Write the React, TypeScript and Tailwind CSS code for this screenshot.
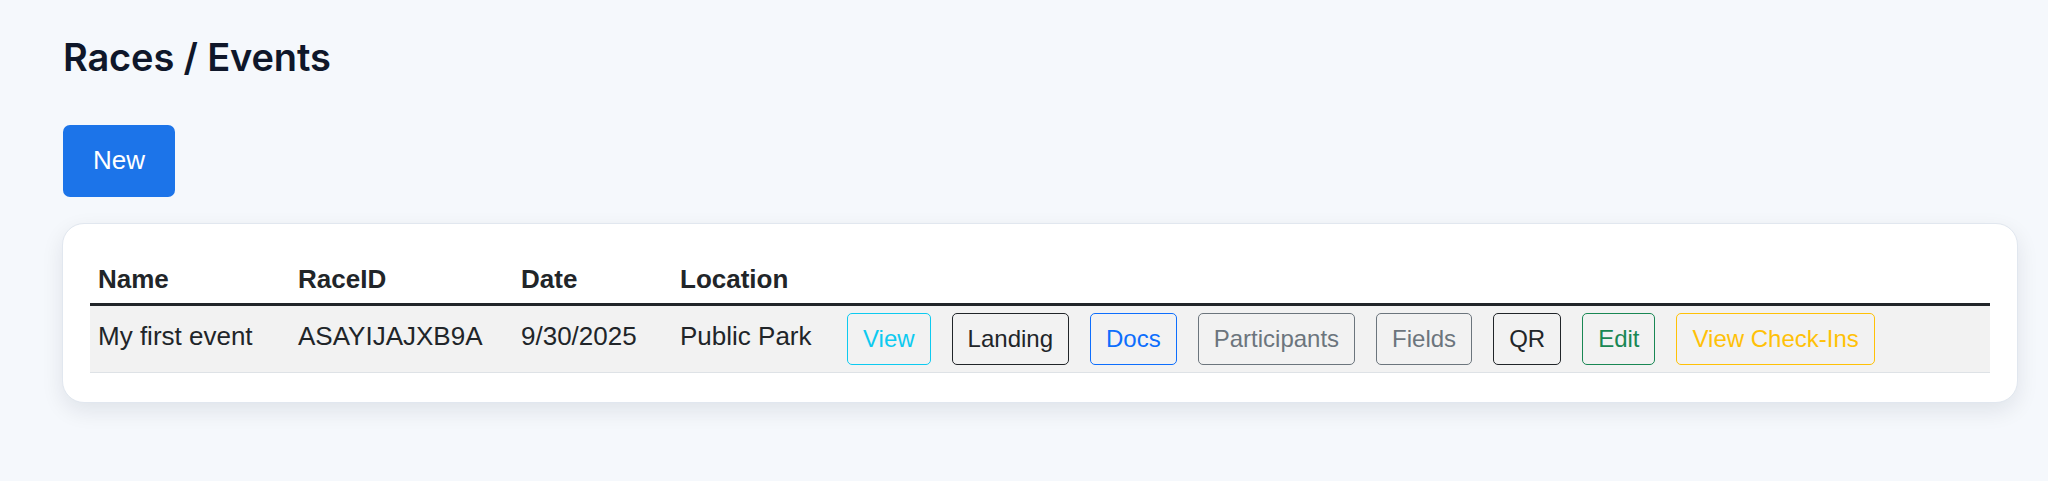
const actions = [
  { label: "View", tone: "border-[#0dcaf0] text-[#0dcaf0]" },
  { label: "Landing", tone: "border-[#212529] text-[#212529]" },
  { label: "Docs", tone: "border-[#0d6efd] text-[#0d6efd]" },
  { label: "Participants", tone: "border-[#6c757d] text-[#6c757d]" },
  { label: "Fields", tone: "border-[#6c757d] text-[#6c757d]" },
  { label: "QR", tone: "border-[#212529] text-[#212529]" },
  { label: "Edit", tone: "border-[#198754] text-[#198754]" },
  { label: "View Check-Ins", tone: "border-[#ffc107] text-[#ffc107]" },
];

const races = [
  {
    id: "ASAYIJAJXB9A",
    name: "My first event",
    date: "9/30/2025",
    location: "Public Park",
  },
];

const OutlineButton = ({ label, tone }: { label: string; tone: string }) => (
  <button
    className={`h-[52px] px-[15px] rounded-[5px] border-[1.5px] bg-transparent text-[24px] leading-[36px] whitespace-nowrap ${tone}`}
  >
    {label}
  </button>
);

export default function App() {
  return (
    <div className="min-h-screen bg-[#f5f8fc] pt-[35px] pb-10 font-['Liberation_Sans',Arial,sans-serif] text-[#212529]">
      <h1 className="ml-[63px] font-['Inter',sans-serif] text-[38px] leading-[1.2] font-semibold text-[#0f172a] tracking-[-0.004em]">
        Races / Events
      </h1>

      <button className="ml-[63px] mt-[44px] h-[72px] px-[30px] rounded-[7px] bg-[#1c74e9] text-white text-[26px]">
        New
      </button>

      <div className="ml-[62px] mr-[30px] mt-[26px] bg-white border-[1.5px] border-[#e1e7ef] rounded-[22px] shadow-[0_8px_22px_rgba(15,23,42,0.09)] px-[27px] pt-[24px] pb-[29px]">
        <table className="w-full border-collapse text-[26px] leading-[39px]">
          <colgroup>
            <col className="w-[200px]" />
            <col className="w-[223px]" />
            <col className="w-[159px]" />
            <col className="w-[167px]" />
            <col />
          </colgroup>
          <thead>
            <tr className="border-b-[3px] border-[#212529]">
              <th className="text-left font-bold px-2 pt-3 pb-[4px]">Name</th>
              <th className="text-left font-bold px-2 pt-3 pb-[4px]">RaceID</th>
              <th className="text-left font-bold px-2 pt-3 pb-[4px]">Date</th>
              <th className="text-left font-bold px-2 pt-3 pb-[4px]">Location</th>
              <th className="px-2 pt-3 pb-[4px]"></th>
            </tr>
          </thead>
          <tbody>
            {races.map((race) => (
              <tr key={race.id} className="bg-[#f2f2f2] border-b-[1.5px] border-[#dee2e6]">
                <td className="align-top px-2 pt-[11px] whitespace-nowrap">{race.name}</td>
                <td className="align-top px-2 pt-[11px]">{race.id}</td>
                <td className="align-top px-2 pt-[11px]">{race.date}</td>
                <td className="align-top px-2 pt-[11px] whitespace-nowrap">{race.location}</td>
                <td className="px-2 py-[7px]">
                  <div className="flex items-center gap-[21px]">
                    {actions.map((a) => (
                      <OutlineButton key={a.label} label={a.label} tone={a.tone} />
                    ))}
                  </div>
                </td>
              </tr>
            ))}
          </tbody>
        </table>
      </div>
    </div>
  );
}
